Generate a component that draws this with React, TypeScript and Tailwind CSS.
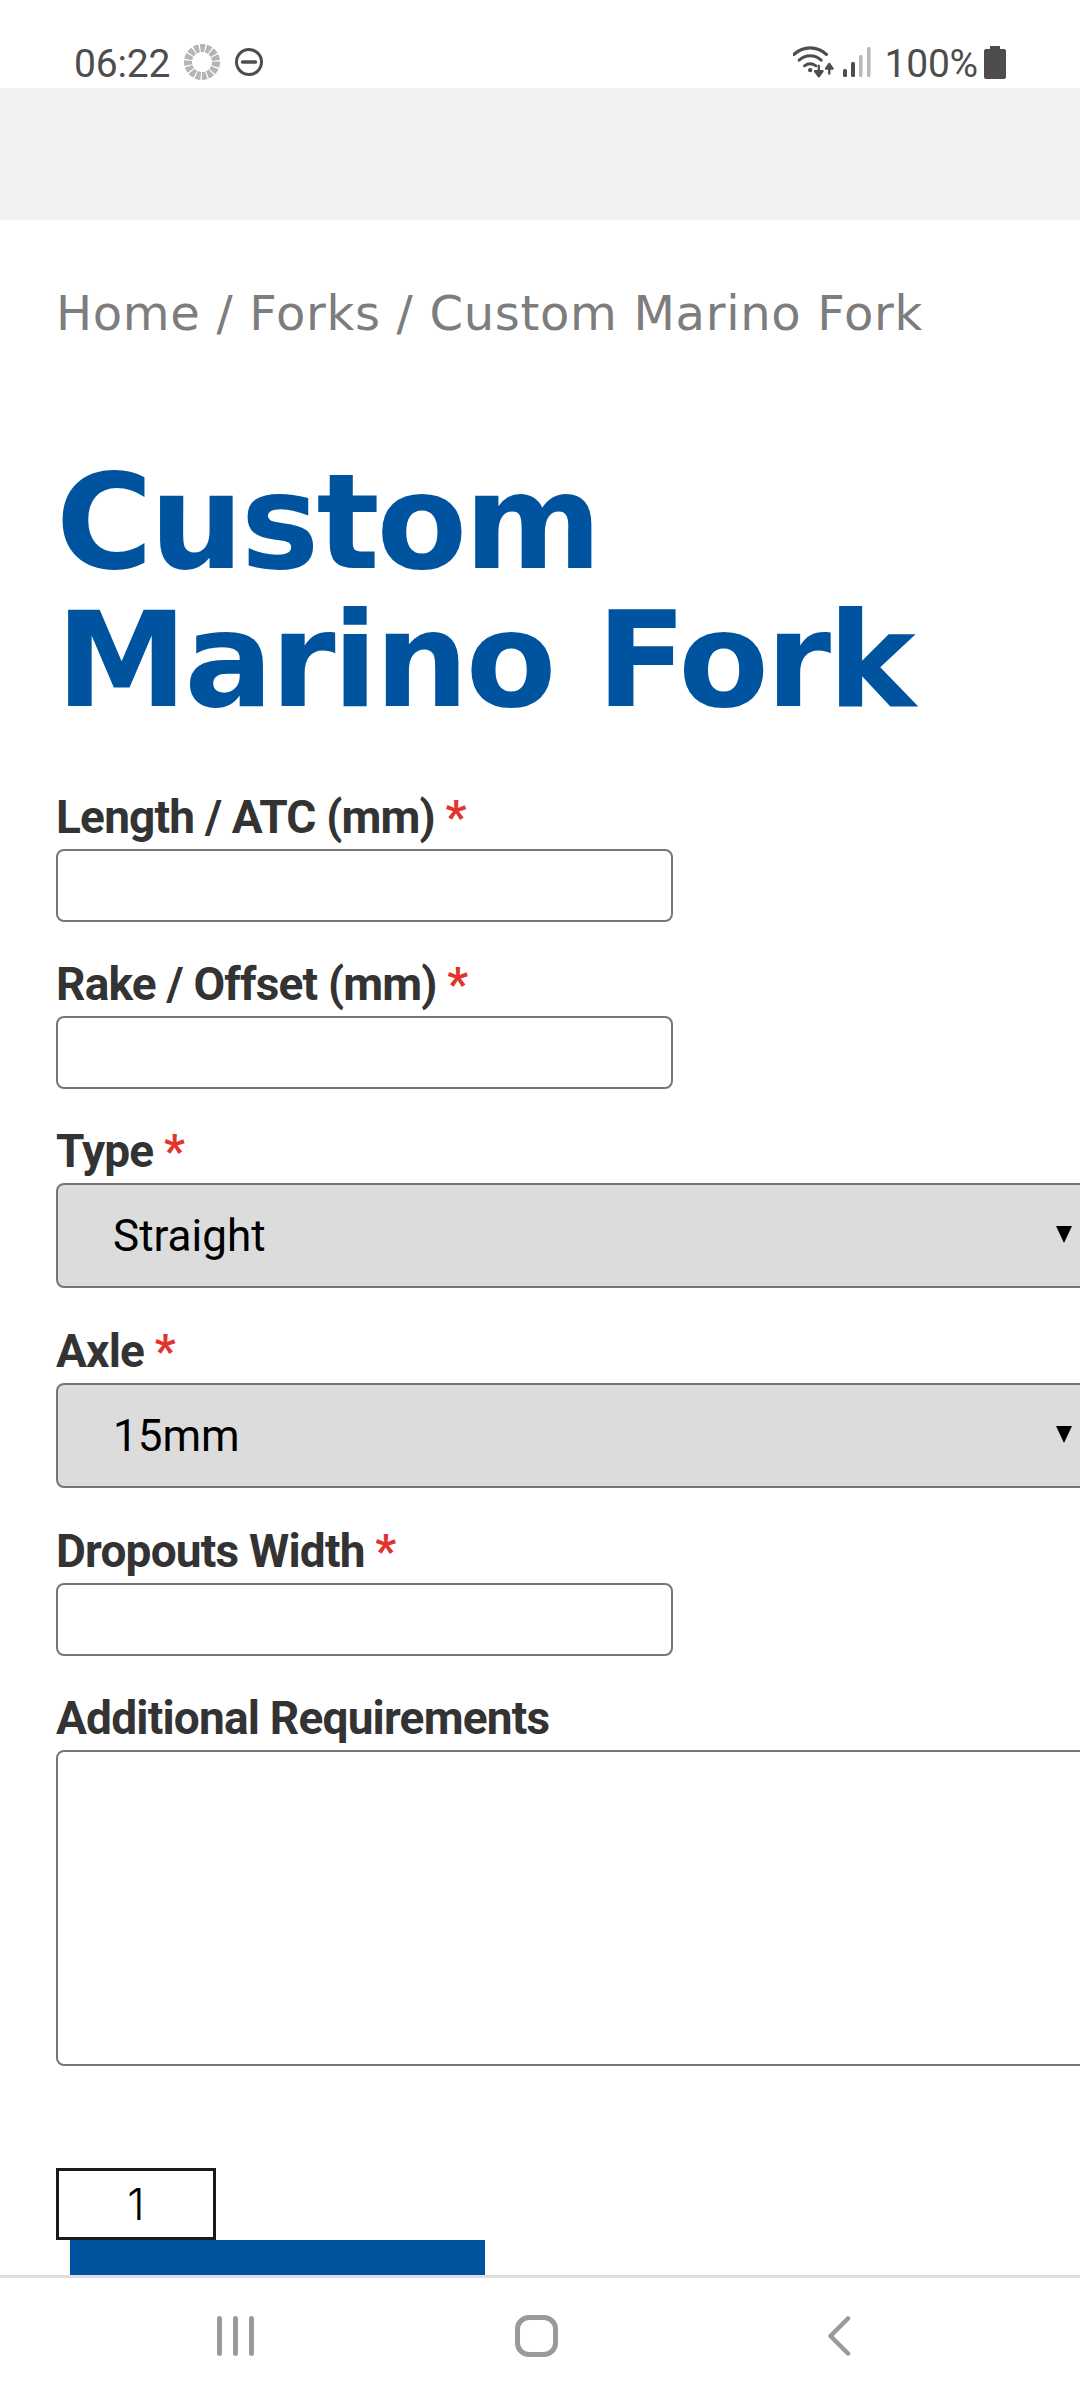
import React from "react";

const roboto = "font-['Roboto',sans-serif]";
const display = "font-['DejaVu_Sans',sans-serif]";

function Label({ text, required = true }: { text: string; required?: boolean }) {
  return (
    <label className={`block h-[56px] ${roboto} text-[46px] leading-[48px] font-bold tracking-[-0.8px] text-[#333333] whitespace-nowrap`}>
      {text}
      {required && <span className="text-[#e2342d] font-bold"> *</span>}
    </label>
  );
}

function TextField({ label }: { label: string }) {
  return (
    <div className="mb-[38px]">
      <Label text={label} />
      <input className="block w-[617px] h-[73px] bg-white border-2 border-[#767676] rounded-[8px]" />
    </div>
  );
}

function SelectField({ label, value }: { label: string; value: string }) {
  return (
    <div className="mb-[39px]">
      <Label text={label} />
      <div className="relative w-[1100px] h-[105px]">
        <select
          defaultValue={value}
          className={`block w-full h-full appearance-none bg-[#dcdcdc] border-2 border-[#767676] rounded-[8px] pl-[55px] ${roboto} text-[44px] text-black`}
        >
          <option>{value}</option>
        </select>
        <svg className="absolute left-[1000px] top-[43px] w-[16px] h-[17px]" viewBox="0 0 16 17">
          <polygon points="0,0 16,0 8,17" fill="#000" />
        </svg>
      </div>
    </div>
  );
}

export default function App() {
  return (
    <div className="w-[1080px] h-[2400px] overflow-hidden bg-white flex flex-col">
      {/* Status bar */}
      <div className="h-[88px] shrink-0 pl-[74px] pr-[74px] pt-[42px] flex items-start justify-between text-[#4d4d4d]">
        <div className="flex items-center h-[40px]">
          <span className={`${roboto} text-[39px] leading-[40px] tracking-[-0.2px] mt-[3px]`}>06:22</span>
          <svg className="ml-[13px] w-[38px] h-[38px]" viewBox="0 0 38 38">
            <circle cx="19" cy="19" r="14" fill="none" stroke="#b5b5b5" strokeWidth="8" strokeDasharray="4.6 1.2" />
          </svg>
          <svg className="ml-[13px] w-[30px] h-[30px]" viewBox="0 0 30 30">
            <circle cx="15" cy="15" r="12.5" fill="none" stroke="#4d4d4d" strokeWidth="3" />
            <line x1="8.5" y1="15" x2="21.5" y2="15" stroke="#4d4d4d" strokeWidth="3.4" strokeLinecap="round" />
          </svg>
        </div>
        <div className="flex items-center h-[40px]">
          <svg className="w-[42px] h-[36px]" viewBox="0 0 44 36">
            <path d="M1 10 C11 1 25 1 35 10" fill="none" stroke="#4d4d4d" strokeWidth="3.4" strokeLinecap="round" />
            <path d="M6.5 16 C13 10 23 10 29.5 16" fill="none" stroke="#4d4d4d" strokeWidth="3.2" strokeLinecap="round" />
            <path d="M12 22 C16 19 20 19 24 22" fill="none" stroke="#4d4d4d" strokeWidth="3" strokeLinecap="round" />
            <circle cx="18" cy="26.5" r="2.3" fill="#4d4d4d" />
            <path d="M27 21 V31 M23 27.5 L27 33 L31 27.5 Z" stroke="#4d4d4d" strokeWidth="2.4" fill="#4d4d4d" strokeLinejoin="round" />
            <path d="M38 31 V22 M34.5 25 L38 20 L41.5 25 Z" stroke="#4d4d4d" strokeWidth="2.4" fill="#4d4d4d" strokeLinejoin="round" />
          </svg>
          <svg className="ml-[8px] w-[30px] h-[34px]" viewBox="0 0 30 34">
            <rect x="0" y="24" width="4" height="8" rx="1.5" fill="#4d4d4d" />
            <rect x="8" y="17" width="4" height="15" rx="1.5" fill="#4d4d4d" />
            <rect x="16" y="10" width="3.5" height="22" rx="1.5" fill="#b9b9b9" />
            <rect x="24" y="2" width="3.5" height="30" rx="1.5" fill="#b9b9b9" />
          </svg>
          <span className={`ml-[11px] ${roboto} text-[39px] leading-[40px] tracking-[-0.2px] mt-[3px]`}>100%</span>
          <svg className="ml-[6px] w-[22px] h-[33px]" viewBox="0 0 22 33">
            <path d="M6 0 H16 V3 H20 Q22 3 22 5 V31 Q22 33 20 33 H2 Q0 33 0 31 V5 Q0 3 2 3 H6 Z" fill="#4d4d4d" />
          </svg>
        </div>
      </div>

      {/* Gray header */}
      <div className="h-[132px] shrink-0 bg-[#f1f1f1]" />

      {/* Page */}
      <main className="flex-1 min-h-0 overflow-hidden pl-[56px]">
        <p className={`mt-[62px] ${display} text-[48px] leading-[62px] tracking-[0.7px] text-[#7d7d7d] whitespace-nowrap`}>
          Home / Forks / Custom Marino Fork
        </p>
        <h1 className={`mt-[109px] ${display} text-[132px] leading-[138px] font-bold tracking-[-3px] text-[#00539f] whitespace-nowrap`}>
          Custom
          <br />
          Marino Fork
        </h1>
        <div className="mt-[64px]">
          <TextField label="Length / ATC (mm)" />
          <TextField label="Rake / Offset (mm)" />
          <SelectField label="Type" value="Straight" />
          <SelectField label="Axle" value="15mm" />
          <TextField label="Dropouts Width" />
          <div>
            <Label text="Additional Requirements" required={false} />
            <textarea className="block w-[1100px] h-[316px] bg-white border-2 border-[#767676] rounded-[8px]" />
          </div>
        </div>
        <input
          defaultValue="1"
          className="block mt-[102px] w-[160px] h-[72px] border-[3px] border-[#1a1a1a] bg-white text-center font-['Inter',sans-serif] font-light text-[44px] text-black"
        />
        <div className="ml-[14px] w-[415px] h-[60px] bg-[#00539f]" />
      </main>

      {/* Nav bar */}
      <nav className="h-[125px] shrink-0 bg-white border-t-[3px] border-[#dedede] pl-[217px] pt-[37px] flex items-start">
        <div className="flex gap-[11px] pt-[1px]">
          <span className="w-[5px] h-[40px] rounded-full bg-[#9a9a9a]" />
          <span className="w-[5px] h-[40px] rounded-full bg-[#9a9a9a]" />
          <span className="w-[5px] h-[40px] rounded-full bg-[#9a9a9a]" />
        </div>
        <span className="ml-[261px] w-[43px] h-[42px] border-[5px] border-[#9a9a9a] rounded-[14px]" />
        <svg className="ml-[269px] mt-[1px] w-[24px] h-[40px]" viewBox="0 0 24 40">
          <path d="M21 2.5 L3.5 20 L21 37.5" fill="none" stroke="#9a9a9a" strokeWidth="4.5" strokeLinecap="round" strokeLinejoin="round" />
        </svg>
      </nav>
    </div>
  );
}
